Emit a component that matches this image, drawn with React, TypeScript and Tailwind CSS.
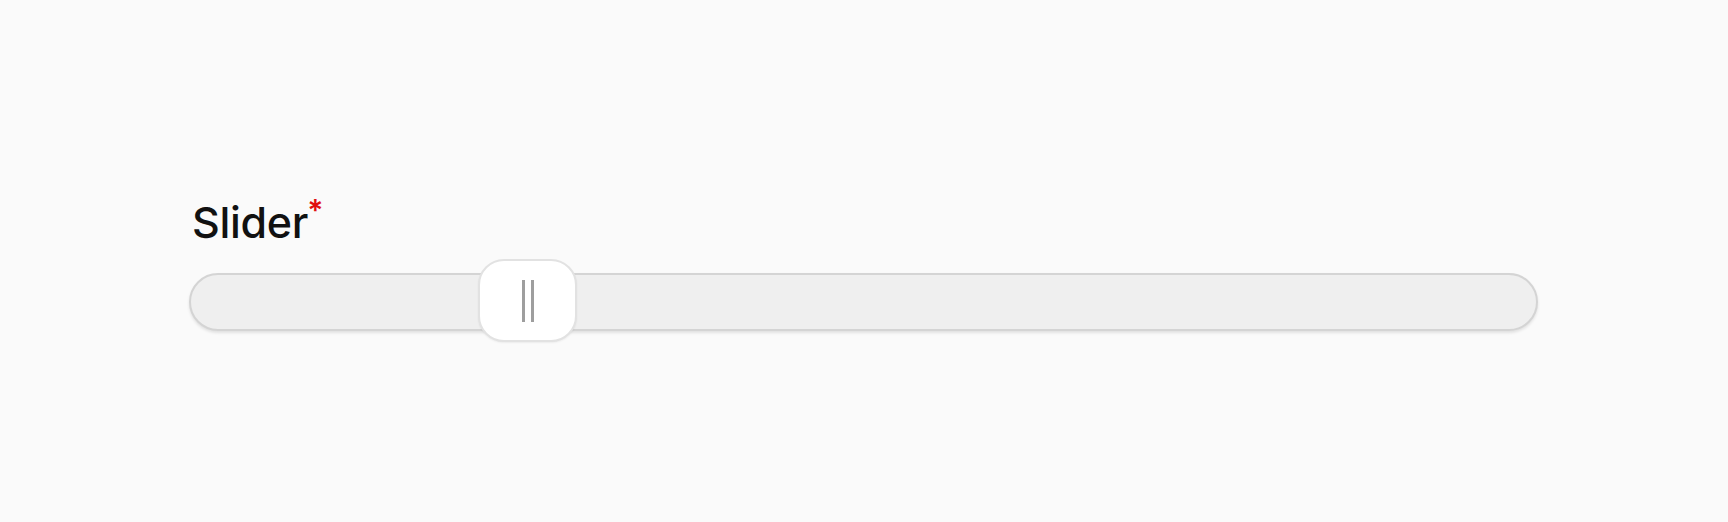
import React from 'react'

const value = 25

export default function App() {
  return (
    <div className="min-h-[522px] w-full bg-[#fafafa] pl-[189px] pr-[190px] pt-[197px] font-['Inter',sans-serif]">
      <div className="h-[50px] pl-[3px] text-[43px] font-medium leading-[50px] text-[#111] tracking-[-0.3px]">
        Slider
        <span className="relative -top-[17px] -ml-[1px] text-[30px] font-semibold text-[#e01010]">*</span>
      </div>

      <div className="relative mt-[12px] h-[83px] pt-[14px]">
        {/* track */}
        <div className="h-[58px] w-full rounded-full border-2 border-[#d4d4d4] bg-[#efefef] shadow-[0_2px_3px_rgba(0,0,0,0.10)]" />

        {/* thumb */}
        <div
          className="absolute top-0 flex h-[83px] w-[99px] items-center justify-center gap-[6px] rounded-[26px] border-2 border-[#e2e2e2] bg-white shadow-[0_1px_2px_rgba(0,0,0,0.06)]"
          style={{ left: `calc(${value}% - 48px)` }}
        >
          <span className="h-[42px] w-[3px] bg-[#9e9e9e]" />
          <span className="h-[42px] w-[3px] bg-[#9e9e9e]" />
        </div>
      </div>
    </div>
  )
}
